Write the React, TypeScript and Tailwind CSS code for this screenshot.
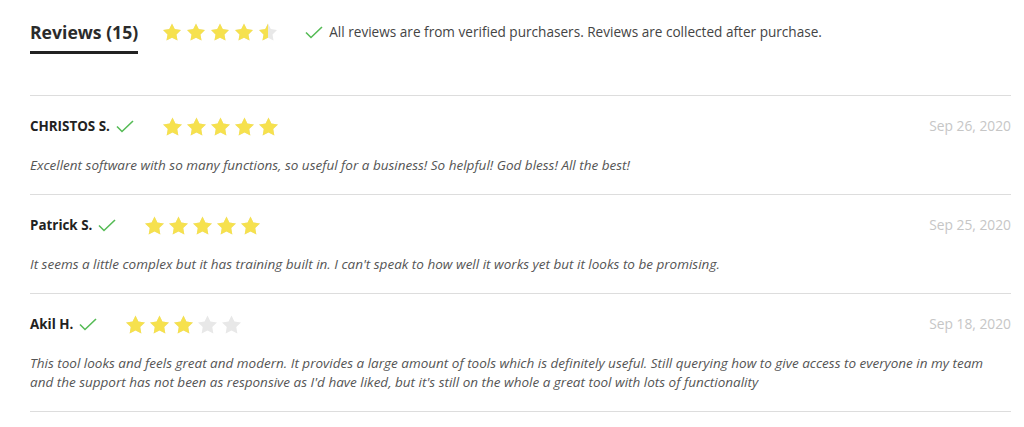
import React from "react";

const STAR = "12,2 15.09,8.26 22,9.27 17,14.14 18.18,21.02 12,17.77 5.82,21.02 7,14.14 2,9.27 8.91,8.26";
const YELLOW = "#f6e14e";
const GREY = "#e8e8e8";

function Star({ fill, size, id }: { fill: number; size: number; id: string }) {
  return (
    <svg width={size} height={size} viewBox="2 1.5 20 20" className="shrink-0">
      <defs>
        <clipPath id={id}>
          <rect x="0" y="0" width={2 + 20 * fill} height="24" />
        </clipPath>
      </defs>
      <polygon points={STAR} fill={GREY} />
      <polygon points={STAR} fill={YELLOW} clipPath={`url(#${id})`} />
    </svg>
  );
}

function Stars({ rating, size, gap, prefix }: { rating: number; size: number; gap: number; prefix: string }) {
  return (
    <div className="flex items-center" style={{ gap }}>
      {[0, 1, 2, 3, 4].map((i) => {
        const f = Math.max(0, Math.min(1, rating - i));
        return <Star key={i} fill={f} size={size} id={`${prefix}-${i}`} />;
      })}
    </div>
  );
}

function Check() {
  return (
    <svg width="18" height="13" viewBox="0 0 18 13" className="shrink-0">
      <polyline points="1,6.5 6,11.5 17,1" fill="none" stroke="#55bb55" strokeWidth="1.6" />
    </svg>
  );
}

const reviews = [
  {
    name: "CHRISTOS S.",
    rating: 5,
    date: "Sep 26, 2020",
    text: "Excellent software with so many functions, so useful for a business! So helpful! God bless! All the best!",
  },
  {
    name: "Patrick S.",
    rating: 5,
    date: "Sep 25, 2020",
    text: "It seems a little complex but it has training built in. I can't speak to how well it works yet but it looks to be promising.",
  },
  {
    name: "Akil H.",
    rating: 3,
    date: "Sep 18, 2020",
    text: "This tool looks and feels great and modern. It provides a large amount of tools which is definitely useful. Still querying how to give access to everyone in my team and the support has not been as responsive as I'd have liked, but it's still on the whole a great tool with lots of functionality",
  },
];

export default function App() {
  return (
    <div
      className="w-[1024px] h-[427px] bg-white pl-[30px] pr-[13px] overflow-hidden"
      style={{ fontFamily: '"Open Sans", "Liberation Sans", sans-serif' }}
    >
      <div className="flex items-start pt-[20px]">
        <div className="flex flex-col">
          <div className="h-[24px] leading-[24px] text-[17.6px] font-bold text-[#2b2b2b]">Reviews (15)</div>
          <div className="mt-[7px] h-[3px] bg-[#222]" />
        </div>
        <div className="h-[24px] flex items-center ml-[25px]">
          <Stars rating={4.5} size={18} gap={6} prefix="hdr" />
        </div>
        <div className="h-[24px] flex items-center ml-[28px]">
          <Check />
          <span className="ml-[6px] text-[13.6px] text-[#444]">
            All reviews are from verified purchasers. Reviews are collected after purchase.
          </span>
        </div>
      </div>
      <div className="mt-[41px]">
        {reviews.map((r, idx) => (
          <div key={idx} className="border-t border-[#dddddd] pt-[20px] pb-[19px]">
            <div className="flex items-center h-[20px]">
              <span className="text-[13.4px] font-bold text-[#222]">{r.name}</span>
              <span className="ml-[6px] flex items-center">
                <Check />
              </span>
              <div className="ml-[29px]">
                <Stars rating={r.rating} size={19} gap={5} prefix={`r${idx}`} />
              </div>
              <span className="ml-auto text-[13.8px] text-[#c6c6c6]">{r.date}</span>
            </div>
            <p className="mt-[20px] pr-[20px] text-[13.5px] leading-[19px] italic text-[#555]">{r.text}</p>
          </div>
        ))}
        <div className="border-t border-[#dddddd]" />
      </div>
    </div>
  );
}
